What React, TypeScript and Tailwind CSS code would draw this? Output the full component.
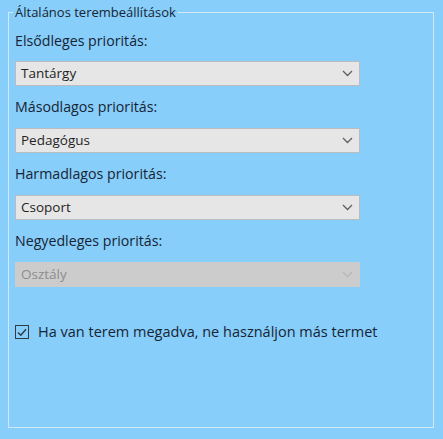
import React from "react";

const font = { fontFamily: '"Open Sans", "Noto Sans", "DejaVu Sans", sans-serif' };

function Chevron({ disabled }: { disabled?: boolean }) {
  return (
    <svg width="11" height="7" viewBox="0 0 11 7" className="shrink-0">
      <path
        d="M1 1 L5.5 5.5 L10 1"
        fill="none"
        stroke={disabled ? "#b8b8b8" : "#5f5f5f"}
        strokeWidth="1.3"
      />
    </svg>
  );
}

function Select({ value, disabled }: { value: string; disabled?: boolean }) {
  return (
    <div
      className={
        "flex h-[25px] w-[345px] items-center justify-between border pl-[5px] pr-[6px] " +
        (disabled
          ? "border-[#cccccc] bg-[#cccccc] text-[#8c8c8c]"
          : "border-[#b9bcc0] bg-[#e6e6e6] text-[#1f1f1f]")
      }
    >
      <span className="text-[13.5px] leading-none">{value}</span>
      <Chevron disabled={disabled} />
    </div>
  );
}

function Label({ children }: { children: React.ReactNode }) {
  return <div className="h-[20px] text-[14.2px] leading-[20px] text-[#182434]">{children}</div>;
}

export default function App() {
  return (
    <div className="h-[439px] w-[443px] overflow-hidden bg-[#87cefa]" style={font}>
      <fieldset className="ml-[8px] mt-[4px] h-[424px] w-[426px] border border-[#d3e9f9]">
        <legend className="ml-[4px] px-[2px] text-[13px] leading-[16px] text-[#182434]">
          Általános terembeállítások
        </legend>
        <div className="flex flex-col pl-[6px] pt-[11px]">
          <Label>Elsődleges prioritás:</Label>
          <div className="mt-[10px]">
            <Select value="Tantárgy" />
          </div>
          <div className="mt-[11px]">
            <Label>Másodlagos prioritás:</Label>
          </div>
          <div className="mt-[11px]">
            <Select value="Pedagógus" />
          </div>
          <div className="mt-[11px]">
            <Label>Harmadlagos prioritás:</Label>
          </div>
          <div className="mt-[11px]">
            <Select value="Csoport" />
          </div>
          <div className="mt-[11px]">
            <Label>Negyedleges prioritás:</Label>
          </div>
          <div className="mt-[11px]">
            <Select value="Osztály" disabled />
          </div>
          <div className="mt-[36px] flex items-center gap-[9px]">
            <div className="flex h-[14px] w-[14px] items-center justify-center border border-[#333a44] bg-[#87cefa]">
              <svg width="10" height="9" viewBox="0 0 10 9">
                <path d="M1 4.5 L3.8 7.3 L9 1.2" fill="none" stroke="#333a44" strokeWidth="1.4" />
              </svg>
            </div>
            <span className="text-[14.5px] leading-[18px] text-[#182434]">
              Ha van terem megadva, ne használjon más termet
            </span>
          </div>
        </div>
      </fieldset>
    </div>
  );
}
